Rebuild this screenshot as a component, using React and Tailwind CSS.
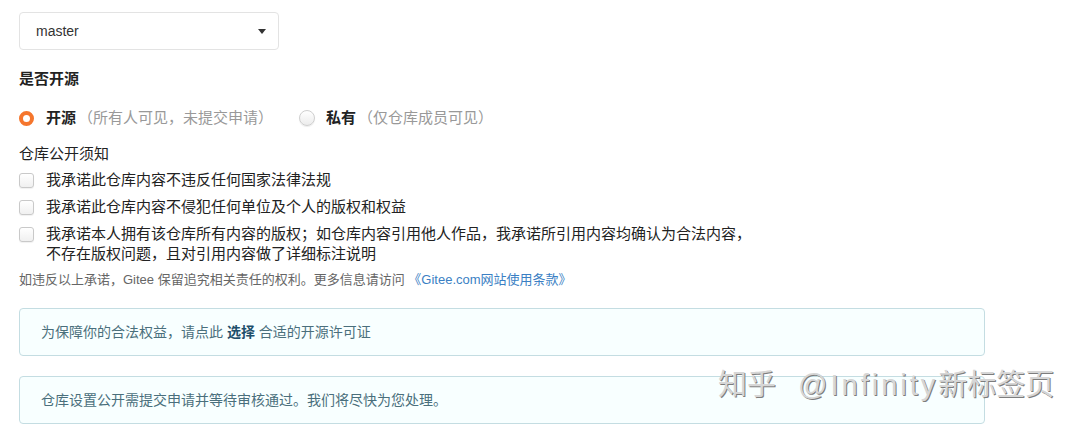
import { useState } from "react";

const font = { fontFamily: '"Liberation Sans", "Noto Sans CJK SC", sans-serif' };

function Radio({ checked }) {
    return checked ? (
        <span className="inline-block h-[15px] w-[15px] rounded-full border-[4px] border-[#f5762d] bg-white" />
    ) : (
        <span className="inline-block h-[16px] w-[16px] rounded-full border border-[#cfcfcf] bg-gradient-to-b from-white to-[#ececec] shadow-[0_1px_1px_rgba(0,0,0,0.08)]" />
    );
}

function Checkbox({ checked, onClick }) {
    return (
        <span
            onClick={onClick}
            className="mt-[3px] inline-block h-[15px] w-[15px] shrink-0 rounded-[3px] border border-[#c9c9c9] bg-gradient-to-b from-white to-[#f0f0f0] shadow-[0_1px_1px_rgba(0,0,0,0.06)]"
        >
            {checked && <span className="block text-center text-[11px] leading-[13px] text-[#333]">✓</span>}
        </span>
    );
}

export default function App() {
    const [checks, setChecks] = useState([false, false, false]);
    const toggle = (i) => setChecks(checks.map((c, j) => (j === i ? !c : c)));

    const rules = [
        ["我承诺此仓库内容不违反任何国家法律法规"],
        ["我承诺此仓库内容不侵犯任何单位及个人的版权和权益"],
        [
            "我承诺本人拥有该仓库所有内容的版权；如仓库内容引用他人作品，我承诺所引用内容均确认为合法内容，",
            "不存在版权问题，且对引用内容做了详细标注说明",
        ],
    ];

    return (
        <div className="relative h-[432px] w-[1080px] overflow-hidden bg-white" style={font}>
            <div className="flex w-[985px] flex-col pl-[19px] pt-[12px] text-[#222]">
                {/* Branch select */}
                <div className="flex h-[38px] w-[260px] items-center justify-between rounded-[4px] border border-[#e3e3e3] pl-[16px] pr-[12px]">
                    <span className="text-[14px] text-[#333]">master</span>
                    <span className="h-0 w-0 border-x-[4px] border-t-[5px] border-x-transparent border-t-[#333]" />
                </div>

                <div className="mt-[19px] text-[15px] font-bold leading-[20px]">是否开源</div>

                <div className="mt-[19px] flex items-center text-[15px] leading-[20px]">
                    <div className="flex items-center">
                        <Radio checked />
                        <span className="ml-[12px] font-bold">开源</span>
                        <span className="ml-[2px] text-[#999]">（所有人可见，未提交申请）</span>
                    </div>
                    <div className="ml-[26px] flex items-center">
                        <Radio />
                        <span className="ml-[11px] font-bold">私有</span>
                        <span className="ml-[2px] text-[#999]">（仅仓库成员可见）</span>
                    </div>
                </div>

                <div className="mt-[16px] text-[15px] leading-[20px]">仓库公开须知</div>

                <div className="flex flex-col">
                    {rules.map((lines, i) => (
                        <div key={i} className={`flex gap-[12px] text-[15px] leading-[20px] ${i === 0 ? "mt-[6px]" : "mt-[7px]"}`}>
                            <Checkbox checked={checks[i]} onClick={() => toggle(i)} />
                            <div className="flex flex-col">
                                {lines.map((l) => (
                                    <span key={l}>{l}</span>
                                ))}
                            </div>
                        </div>
                    ))}
                </div>

                <div className="mt-[7px] text-[13px] leading-[18px] text-[#666]">
                    如违反以上承诺，Gitee 保留追究相关责任的权利。更多信息请访问{" "}
                    <a className="text-[#3b7fc4]">《Gitee.com网站使用条款》</a>
                </div>

                {/* Info messages */}
                <div className="mt-[19px] flex h-[48px] w-[966px] items-center rounded-[4px] border border-[#c4dde2] bg-[#f8ffff] px-[21px] text-[14px] text-[#4a6f7c]">
                    为保障你的合法权益，请点此&nbsp;<b className="font-bold text-[#1f4f6b]">选择</b>&nbsp;合适的开源许可证
                </div>
                <div className="mt-[20px] flex h-[48px] w-[966px] items-center rounded-[4px] border border-[#c4dde2] bg-[#f8ffff] px-[21px] text-[14px] text-[#4a6f7c]">
                    仓库设置公开需提交申请并等待审核通过。我们将尽快为您处理。
                </div>
            </div>

            {/* watermark */}
            <div className="absolute left-[718px] top-[367px] flex whitespace-nowrap text-[29px] leading-[36px] text-[#d6d6d6] [text-shadow:1px_1px_0_#7d7d7d]">
                <span>知乎</span>
                <span className="ml-[22px] tracking-[3px]">@Infinity</span>
                <span>新标签页</span>
            </div>
        </div>
    );
}
